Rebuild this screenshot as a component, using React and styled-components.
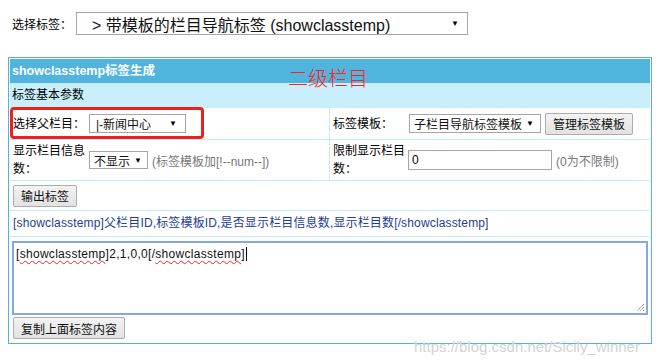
import styled, { createGlobalStyle } from 'styled-components'

const GlobalStyle = createGlobalStyle`
  html, body { margin: 0; padding: 0; background: #fff; }
  body {
    font-family: "Liberation Sans", "Noto Sans CJK SC", sans-serif;
    font-size: 12px;
    color: #000;
  }
`

const Page = styled.div`
  position: relative;
  width: 660px;
  height: 363px;
  padding: 12px 0 0 8px;
  box-sizing: border-box;
  overflow: hidden;
`

const TopBar = styled.div`
  display: flex;
  align-items: center;
  height: 23px;
  padding-left: 4px;
`

const TopLabel = styled.span`
  width: 64px;
  flex: none;
`

const Select = styled.div`
  width: ${({ $w }) => $w}px;
  height: ${({ $h }) => $h || 19}px;
  box-sizing: border-box;
  border: 1px solid #a6a6a6;
  background: #fff;
  display: flex;
  align-items: center;
  justify-content: space-between;
  padding: ${({ $pad }) => $pad || '0 6px 0 4px'};
  font-size: ${({ $fs }) => $fs || 12}px;
  color: #111;
  flex: none;
  white-space: nowrap;
`

const Arrow = styled.span`
  font-size: 8px;
  color: #000;
  margin-left: 4px;
`

const Panel = styled.div`
  margin-top: 22px;
  width: 644px;
  border: 1px solid #4fb3dd;
  padding: 1px;
  box-sizing: border-box;
`

const Header = styled.div`
  height: 24px;
  line-height: 24px;
  background: #50b4dd;
  color: #fff;
  font-weight: bold;
  font-size: 12.5px;
  padding-left: 2px;
`

const SubHeader = styled.div`
  height: 25px;
  line-height: 25px;
  background: #c9effc;
  padding-left: 2px;
`

const Row = styled.div`
  display: grid;
  grid-template-columns: ${({ $split }) => ($split ? '320px 1fr' : '1fr')};
  height: ${({ $h }) => $h}px;
  border-bottom: ${({ $last }) => ($last ? 'none' : '1px solid #c3ebfb')};
`

const Cell = styled.div`
  display: flex;
  align-items: center;
  padding: 0 3px;
  border-right: ${({ $divider }) => ($divider ? '1px solid #c3ebfb' : 'none')};
`

const StackCell = styled.div`
  display: flex;
  flex-direction: column;
  align-items: flex-start;
  padding: 4px 2px 3px;
`

const Label = styled.div`
  width: ${({ $w }) => $w || 76}px;
  flex: none;
  line-height: 18px;
`

const Hint = styled.span`
  color: #777;
  margin-left: 4px;
`

const Input = styled.div`
  width: 144px;
  height: 20px;
  box-sizing: border-box;
  border: 1px solid #a6a6a6;
  padding-left: 3px;
  line-height: 18px;
  flex: none;
`

const Button = styled.div`
  height: 22px;
  box-sizing: border-box;
  padding: 0 7px;
  margin-left: ${({ $ml }) => $ml || 0}px;
  margin-top: ${({ $mt }) => $mt || 0}px;
  border: 1px solid #acacac;
  border-radius: 2px;
  background: linear-gradient(#f3f3f3, #e2e2e2);
  display: inline-flex;
  align-items: center;
  flex: none;
  color: #111;
`

const SyntaxLine = styled.div`
  color: #1d3e93;
  padding-left: 3px;
  line-height: 25px;
  letter-spacing: 0.15px;
`

const TextArea = styled.div`
  position: relative;
  width: 636px;
  height: 74px;
  box-sizing: border-box;
  border: 2px solid #86a7e6;
  padding: 3px 2px;
  font-size: 12px;
  letter-spacing: 0.3px;
  line-height: 16px;
  color: #111;
`

const Spell = styled.span`
  text-decoration: underline wavy #e0302f;
  text-decoration-thickness: 1px;
  text-underline-offset: 2px;
`

const Caret = styled.span`
  display: inline-block;
  width: 0;
  height: 14px;
  border-left: 1px solid #000;
  vertical-align: -3px;
  margin-left: 1px;
`

const Grip = styled.svg`
  position: absolute;
  right: 1px;
  bottom: 1px;
`

const Note = styled.div`
  position: absolute;
  left: 288px;
  top: 63px;
  font-size: 20px;
  font-weight: 300;
  color: #ff1f1f;
`

const Highlight = styled.div`
  position: absolute;
  left: 10px;
  top: 107px;
  width: 194px;
  height: 32px;
  box-sizing: border-box;
  border: 3px solid #f21d1d;
  border-radius: 4px;
`

const Watermark = styled.div`
  position: absolute;
  left: 414px;
  top: 338px;
  font-size: 15px;
  color: rgba(205, 205, 205, 0.9);
  text-shadow: 0 0 1px rgba(255, 255, 255, 0.8);
  white-space: nowrap;
`

const App = () => {
  return (
    <Page>
      <GlobalStyle />
      <TopBar>
        <TopLabel>选择标签：</TopLabel>
        <Select $w={392} $h={23} $fs={16} $pad="0 8px 0 15px">
          <span>&gt; 带模板的栏目导航标签 (showclasstemp)</span>
          <Arrow>▼</Arrow>
        </Select>
      </TopBar>

      <Panel>
        <Header>showclasstemp标签生成</Header>
        <SubHeader>标签基本参数</SubHeader>

        <Row $split $h={31}>
          <Cell $divider>
            <Label>选择父栏目：</Label>
            <Select $w={97} $pad="0 8px 0 6px">
              <span>|-新闻中心</span>
              <Arrow>▼</Arrow>
            </Select>
          </Cell>
          <Cell>
            <Label>标签模板：</Label>
            <Select $w={132}>
              <span>子栏目导航标签模板</span>
              <Arrow>▼</Arrow>
            </Select>
            <Button $ml={4}>管理标签模板</Button>
          </Cell>
        </Row>

        <Row $split $h={40}>
          <Cell $divider>
            <Label>显示栏目信息数：</Label>
            <Select $w={59} $h={18}>
              <span>不显示</span>
              <Arrow>▼</Arrow>
            </Select>
            <Hint>(标签模板加[!--num--])</Hint>
          </Cell>
          <Cell>
            <Label $w={75}>限制显示栏目数：</Label>
            <Input>0</Input>
            <Hint>(0为不限制)</Hint>
          </Cell>
        </Row>

        <Row $h={29}>
          <Cell>
            <Button>输出标签</Button>
          </Cell>
        </Row>

        <Row $h={25}>
          <SyntaxLine>
            [showclasstemp]父栏目ID,标签模板ID,是否显示栏目信息数,显示栏目数[/showclasstemp]
          </SyntaxLine>
        </Row>

        <Row $h={105} $last>
          <StackCell>
            <TextArea>
              [<Spell>showclasstemp</Spell>]2,1,0,0[/<Spell>showclasstemp</Spell>]
              <Caret />
              <Grip width="10" height="10" viewBox="0 0 10 10">
                <path d="M9 2 L2 9 M9 5 L5 9 M9 8 L8 9" stroke="#555" strokeWidth="1" strokeDasharray="1 1" fill="none" />
              </Grip>
            </TextArea>
            <Button $ml={1} $mt={2}>复制上面标签内容</Button>
          </StackCell>
        </Row>
      </Panel>

      <Note>二级栏目</Note>
      <Highlight />
      <Watermark>https://blog.csdn.net/Sicily_winner</Watermark>
    </Page>
  )
}

export default App
